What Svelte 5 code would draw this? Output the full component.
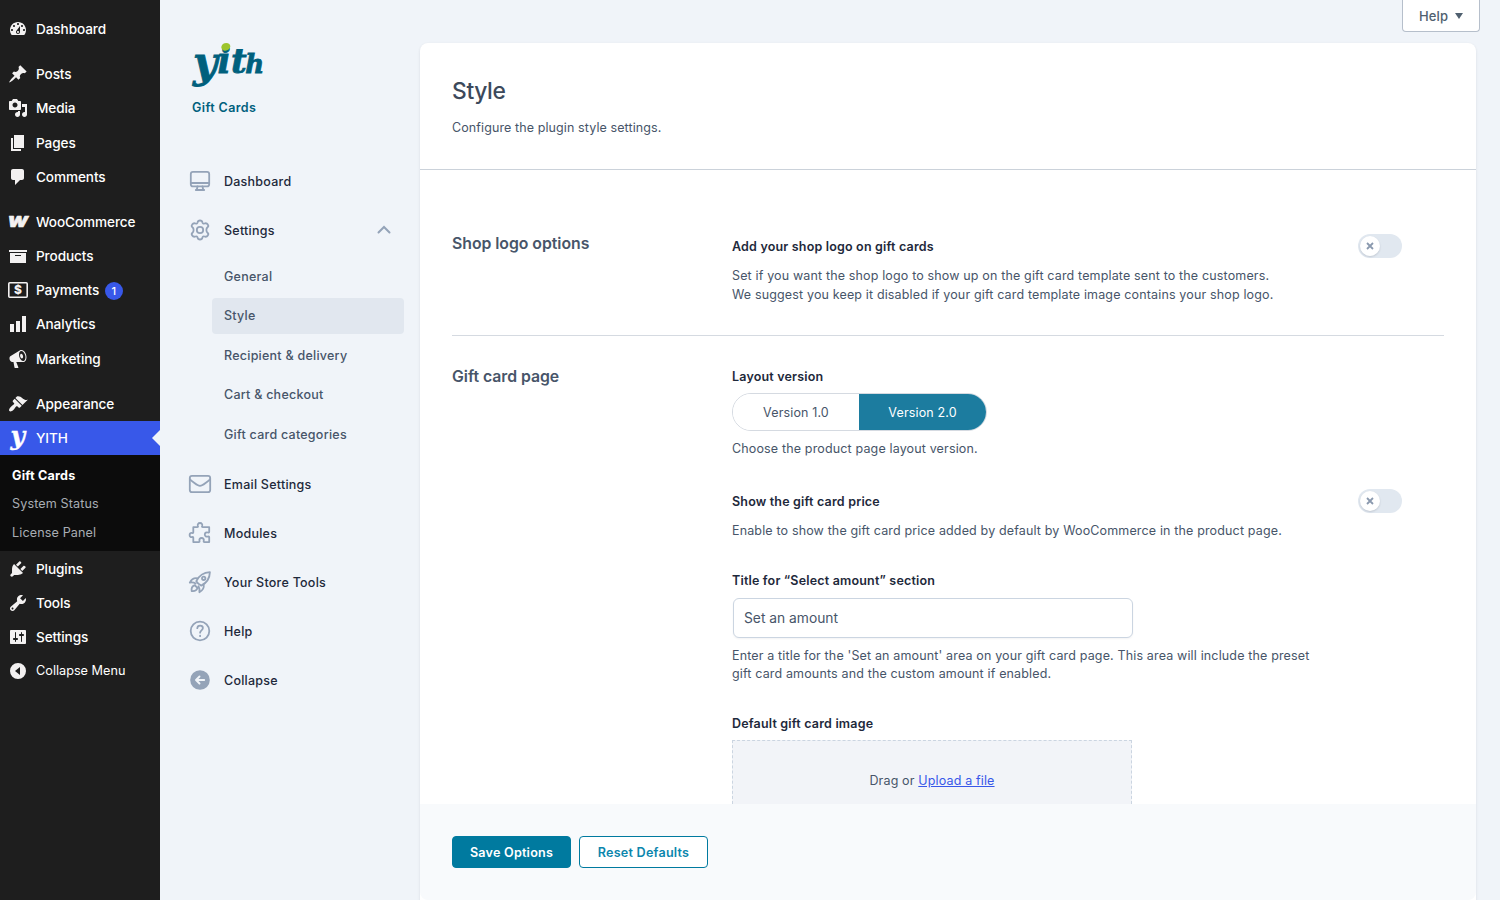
<script>
  // WordPress admin menu, `gap` starts a new group
  const adminMenu = [
    { label: 'Dashboard', icon: 'dashboard' },
    { label: 'Posts', icon: 'post', gap: true },
    { label: 'Media', icon: 'media' },
    { label: 'Pages', icon: 'page' },
    { label: 'Comments', icon: 'comments' },
    { label: 'WooCommerce', icon: 'woo', gap: true },
    { label: 'Products', icon: 'archive' },
    { label: 'Payments', icon: 'payments', badge: 1 },
    { label: 'Analytics', icon: 'chart' },
    { label: 'Marketing', icon: 'megaphone' },
    { label: 'Appearance', icon: 'appearance', gap: true },
    { label: 'YITH', icon: 'yith', children: ['Gift Cards', 'System Status', 'License Panel'] },
    { label: 'Plugins', icon: 'plugins' },
    { label: 'Tools', icon: 'tools' },
    { label: 'Settings', icon: 'settings' }
  ];

  const dashicons = {
    dashboard: 'M3.76 16h12.48c1.1-1.37 1.76-3.11 1.76-5 0-4.42-3.58-8-8-8s-8 3.58-8 8c0 1.89.66 3.63 1.76 5zM10 4c.55 0 1 .45 1 1s-.45 1-1 1-1-.45-1-1 .45-1 1-1zM6 6c.55 0 1 .45 1 1s-.45 1-1 1-1-.45-1-1 .45-1 1-1zm8 0c.55 0 1 .45 1 1s-.45 1-1 1-1-.45-1-1 .45-1 1-1zm-5.37 5.55L12 7v6c0 1.1-.9 2-2 2s-2-.9-2-2c0-.57.24-1.08.63-1.45zM4 10c.55 0 1 .45 1 1s-.45 1-1 1-1-.45-1-1 .45-1 1-1zm12 0c.55 0 1 .45 1 1s-.45 1-1 1-1-.45-1-1 .45-1 1-1zm-5 3c0-.55-.45-1-1-1s-1 .45-1 1 .45 1 1 1 1-.45 1-1z',
    post: 'M10.44 3.02l1.82-1.82 6.36 6.35-1.83 1.82c-1.05-.68-2.48-.57-3.41.36l-.75.75c-.92.93-1.04 2.35-.35 3.41l-1.83 1.82-2.41-2.41-2.8 2.79c-.42.42-3.38 2.71-3.8 2.29s1.86-3.39 2.28-3.81l2.79-2.79L4.1 9.36l1.83-1.82c1.05.69 2.48.57 3.4-.36l.75-.75c.93-.92 1.05-2.35.36-3.41z',
    media: 'M13 11V4c0-.55-.45-1-1-1h-1.67L9 1H5L3.67 3H2c-.55 0-1 .45-1 1v7c0 .55.45 1 1 1h10c.55 0 1-.45 1-1zM7 4.5c1.38 0 2.5 1.12 2.5 2.5S8.38 9.5 7 9.5 4.5 8.38 4.5 7 5.62 4.5 7 4.5zM14 6h5v10.5c0 1.38-1.12 2.5-2.5 2.5S14 17.88 14 16.5s1.12-2.5 2.5-2.5c.17 0 .34.02.5.05V9h-3V6zm-4 8.05V13h2v3.5c0 1.38-1.12 2.5-2.5 2.5S7 17.88 7 16.5 8.12 14 9.5 14c.17 0 .34.02.5.05z',
    page: 'M6 15V2h10v13H6zm-1 1h8v2H3V5h2v11z',
    comments: 'M5 2h9c1.1 0 2 .9 2 2v7c0 1.1-.9 2-2 2h-2l-5 5v-5H5c-1.1 0-2-.9-2-2V4c0-1.1.9-2 2-2z',
    archive: 'M19 4v2H1V4h18zM2 7h16v10H2V7zm11 3V9H7v1h6z',
    chart: 'M18 18V2h-4v16h4zm-6 0V7H8v11h4zm-6 0v-8H2v8h4z',
    megaphone: 'M18.15 5.94c.46 1.62.38 3.22-.02 4.48-.42 1.28-1.26 2.18-2.3 2.48-.16.06-.26.06-.4.06-.06.02-.12.02-.18.02-.06.02-.14.02-.22.02h-6.8l2.22 5.5c.02.14-.06.26-.14.34-.08.1-.24.16-.34.16H6.95c-.1 0-.26-.06-.34-.16-.08-.08-.16-.2-.14-.34l-1-5.5H4.25l-.02-.02c-.5.06-1.08-.18-1.54-.62s-.88-1.08-1.06-1.88c-.24-.8-.2-1.56-.02-2.2.18-.62.58-1.08 1.06-1.3l.02-.02 9-5.4c.1-.06.18-.1.24-.16.06-.04.14-.08.24-.12.16-.08.28-.12.5-.18 1.04-.3 2.24.1 3.22.98s1.84 2.24 2.26 3.86zm-2.58 5.98h-.02c.4-.1.74-.34 1.04-.7.58-.7.86-1.76.86-3.04 0-.64-.1-1.3-.28-1.98-.34-1.36-1.02-2.5-1.78-3.24s-1.68-1.1-2.46-.88c-.82.22-1.4.96-1.7 2-.32 1.04-.28 2.36.06 3.72.38 1.36 1 2.5 1.8 3.24.78.74 1.62 1.1 2.48.88zm-2.54-7.08c.22-.04.42-.02.62.04.38.16.76.48 1.02 1s.42 1.2.42 1.78c0 .3-.04.56-.12.8-.18.48-.44.84-.86.94-.34.1-.8-.06-1.14-.4s-.64-.86-.78-1.5c-.18-.62-.12-1.24.02-1.72s.48-.84.82-.94z',
    appearance: 'M14.48 11.06L7.41 3.99l1.5-1.5c.5-.56 2.3-.47 3.51.32 1.21.8 1.43 1.28 2.91 2.1 1.18.64 2.45 1.26 4.45.85zm-.71.71L6.7 4.7 4.93 6.47c-.39.39-.39 1.02 0 1.41l1.06 1.06c.39.39.39 1.03 0 1.42-.6.6-1.43 1.11-2.21 1.69-.35.26-.7.53-1.01.84C1.43 14.23.4 16.08 1.4 17.07c.99 1 2.84-.03 4.18-1.36.31-.31.58-.66.85-1.02.57-.78 1.08-1.61 1.69-2.21.39-.39 1.02-.39 1.41 0l1.06 1.06c.39.39 1.02.39 1.41 0z',
    plugins: 'M13.11 4.36L9.87 7.6 8 5.73l3.24-3.24c.35-.34 1.05-.2 1.56.32.52.51.66 1.21.31 1.55zm-8 1.77l.91-1.12 9.01 9.01-1.19.84c-.71.71-2.63 1.16-3.82 1.16H6.14L4.9 17.26c-.59.59-1.54.59-2.12 0-.59-.58-.59-1.53 0-2.12l1.24-1.24v-3.88c0-1.13.4-3.19 1.09-3.89zm7.26 3.97l3.24-3.24c.34-.35 1.04-.21 1.55.31.52.51.66 1.21.31 1.55l-3.24 3.25z',
    tools: 'M16.68 9.77c-1.34 1.34-3.3 1.67-4.95.99l-5.41 6.52c-.99.99-2.59.99-3.58 0s-.99-2.59 0-3.57l6.52-5.42c-.68-1.65-.35-3.61.99-4.95 1.28-1.28 3.12-1.62 4.72-1.06l-2.89 2.89 2.82 2.82 2.86-2.87c.53 1.58.18 3.39-1.08 4.65zM3.81 16.21c.4.39 1.04.39 1.43 0 .4-.4.4-1.04 0-1.43-.39-.4-1.03-.4-1.43 0-.39.39-.39 1.03 0 1.43z',
    settings: 'M18 16V4c0-.55-.45-1-1-1H3c-.55 0-1 .45-1 1v12c0 .55.45 1 1 1h14c.55 0 1-.45 1-1zM8 11h1c.55 0 1 .45 1 1s-.45 1-1 1H8v1.5c0 .28-.22.5-.5.5s-.5-.22-.5-.5V13H6c-.55 0-1-.45-1-1s.45-1 1-1h1V5.5c0-.28.22-.5.5-.5s.5.22.5.5V11zm5-2h-1c-.55 0-1-.45-1-1s.45-1 1-1h1V5.5c0-.28.22-.5.5-.5s.5.22.5.5V7h1c.55 0 1 .45 1 1s-.45 1-1 1h-1v5.5c0 .28-.22.5-.5.5s-.5-.22-.5-.5V9z'
  };

  const panelMenu = [
    { label: 'Dashboard', icon: 'desktop' },
    { label: 'Settings', icon: 'cog', children: ['General', 'Style', 'Recipient & delivery', 'Cart & checkout', 'Gift card categories'] },
    { label: 'Email Settings', icon: 'mail' },
    { label: 'Modules', icon: 'puzzle' },
    { label: 'Your Store Tools', icon: 'rocket' },
    { label: 'Help', icon: 'help' },
    { label: 'Collapse', icon: 'collapse' }
  ];

  let currentTab = 'Style';
  let layoutVersion = '2.0';
  let shopLogo = false;
  let showPrice = false;
  let amountTitle = 'Set an amount';
</script>

<div class="wp">
  <nav class="admin-menu">
    {#each adminMenu as item}
      <div class="admin-item" class:gap={item.gap} class:active={item.children}>
        <svg class="admin-icon" width="20" height="20" viewBox="0 0 20 20">
          {#if item.icon === 'woo'}
            <text class="woo" x="-0.5" y="15.3" textLength="20.5" lengthAdjust="spacingAndGlyphs">W</text>
          {:else if item.icon === 'payments'}
            <rect x="0.8" y="2.8" width="18.4" height="14.4" rx="1" fill="none" stroke="currentColor" stroke-width="1.6" />
            <text class="dollar" x="10" y="14.2" text-anchor="middle">$</text>
          {:else if item.icon === 'yith'}
            <text class="y-mark" x="2.5" y="16.5" textLength="14.5" lengthAdjust="spacingAndGlyphs">y</text>
          {:else}
            <path d={dashicons[item.icon]} fill-rule="evenodd" />
          {/if}
        </svg>
        <span>{item.label}</span>
        {#if item.badge}<span class="badge">{item.badge}</span>{/if}
      </div>
      {#if item.children}
        <div class="admin-sub">
          {#each item.children as child, i}
            <div class:current={i === 0}>{child}</div>
          {/each}
        </div>
      {/if}
    {/each}
    <div class="admin-item collapse-menu">
      <svg class="admin-icon" width="20" height="20" viewBox="0 0 20 20">
        <path d="M10 2a8 8 0 1 0 0 16 8 8 0 0 0 0-16zm2 12l-5-4 5-4z" fill-rule="evenodd" />
      </svg>
      <span>Collapse Menu</span>
    </div>
  </nav>

  <aside class="panel-nav">
    <div class="brand">
      <svg width="76" height="52" viewBox="0 0 76 52">
        <text class="wordmark"><tspan x="1" y="37" font-size="42">y</tspan><tspan x="25.5" y="33" font-size="35">i</tspan><tspan x="39" y="33" font-size="34">t</tspan><tspan x="53.200" y="33" font-size="26">h</tspan></text>
        <ellipse cx="33.8" cy="6.8" rx="4.6" ry="3.8" fill="#9dc52c" transform="rotate(-20 33.8 6.8)" />
      </svg>
      <div class="brand-name">Gift Cards</div>
    </div>

    {#each panelMenu as item}
      <div class="panel-item">
        <svg class="panel-icon" width="24" height="24" viewBox="0 0 24 24">
          {#if item.icon === 'desktop'}
            <rect x="2.8" y="2.8" width="18.4" height="14.6" rx="2.2" />
            <path d="M3 14h18M9.5 17.5l-.6 2.8M14.5 17.5l.6 2.8M7.8 21h8.4" />
          {:else if item.icon === 'cog'}
            <path d="M9.6 4.400c.2-1.200 1-1.900 2.400-1.900s2.200.7 2.400 1.900c.2 1 1 1.500 2 1.100 1.400-.5 2.700-.1 3.400 1 .800 1.100.6 2.200-.5 3-.9.8-.9 1.700-.9 2.500s0 1.700.9 2.500c1.100.8 1.300 1.900.5 3-.7 1.100-2 1.500-3.400 1-1-.4-1.800.1-2 1.100-.2 1.200-1 1.900-2.400 1.900s-2.200-.7-2.400-1.900c-.2-1-1-1.500-2-1.100-1.400.5-2.700.1-3.400-1-.8-1.100-.6-2.200.5-3 .9-.8.9-1.700.9-2.500s0-1.700-.9-2.500c-1.100-.8-1.300-1.900-.5-3 .7-1.100 2-1.500 3.400-1 1 .4 1.800-.1 2-1.100z" />
            <circle cx="12" cy="12" r="3.2" />
          {:else if item.icon === 'mail'}
            <rect x="1.8" y="3.8" width="20.4" height="16.4" rx="2.2" />
            <path d="M2 7.3c1 1.200 6.400 5.200 8 6 1.300.7 2.700.7 4 0 1.600-.8 7-4.800 8-6" />
          {:else if item.icon === 'puzzle'}
            <path d="M5.3 6.200h3.900c.8 0 1-.5.7-1.200-.6-1.600.3-3 2.100-3s2.700 1.400 2.100 3c-.3.700-.1 1.200.7 1.200h6.400v4.600c0 .8-.5 1-1.200.7-1.600-.6-3.200.3-3.200 2s1.600 2.600 3.200 2c.7-.3 1.200-.1 1.200.7v4.900h-4.700c-.8 0-1-.5-.8-1.200.5-1.500-.4-2.900-2.100-2.900s-2.600 1.400-2.100 2.900c.2.700 0 1.200-.8 1.200H5.300v-4.400c0-.8-.5-1-1.200-.7-1.300.5-2.500-.4-2.500-2s1.200-2.500 2.500-2c.7.200 1.200 0 1.200-.7z" />
          {:else if item.icon === 'rocket'}
            <path d="M8.300 11.200C11 5.500 15.500 2.400 21.900 2.100c-.2 6.200-3.500 10.900-8.600 13.500-1.500-.7-4.200-3-5-4.400z" />
            <path d="M9.500 8.300c-3.500-.6-6.200 1.300-7.700 4.300 2-.5 4-.3 5.900.9M15.700 14.500c.6 3.500-1.300 6.100-4.300 7.700.4-2 .2-4-.9-5.900M6.300 15.300c-2.300.9-3 3.500-2.600 5.800 2.300.3 4.900-.5 5.700-2.800M7 15.500l2.200 2.200" />
            <circle cx="15.7" cy="8.3" r="1.7" />
          {:else if item.icon === 'help'}
            <circle cx="12" cy="12" r="9.3" />
            <path d="M9.300 9.200c.1-1.500 1.200-2.500 2.800-2.500s2.800 1 2.800 2.400c0 2.200-2.800 2.300-2.800 4.600M12.100 16.600v.6" />
          {:else}
            <circle cx="12" cy="12" r="9.8" fill="#94a3b8" stroke="none" />
            <path d="M16.200 12H8.200M11.500 8.500L8 12l3.500 3.500" stroke="#f0f4f9" stroke-width="1.9" />
          {/if}
        </svg>
        <span>{item.label}</span>
        {#if item.children}
          <svg class="chevron" width="16" height="16" viewBox="0 0 16 16"><path d="M2.500 10.500L8 5l5.500 5.500" /></svg>
        {/if}
      </div>
      {#if item.children}
        <div class="panel-sub">
          {#each item.children as child}
            <div class="sub-item" class:selected={child === currentTab}>{child}</div>
          {/each}
        </div>
      {/if}
    {/each}
  </aside>

  <main class="content">
    <button class="screen-help">Help <span class="caret"></span></button>

    <div class="card">
      <div class="options">
        <header>
          <h1>Style</h1>
          <p>Configure the plugin style settings.</p>
        </header>

        <section class="logo-options">
          <h2>Shop logo options</h2>
          <div class="field with-toggle">
            <div>
              <h3>Add your shop logo on gift cards</h3>
              <p class="desc">Set if you want the shop logo to show up on the gift card template sent to the customers.<br />We suggest you keep it disabled if your gift card template image contains your shop logo.</p>
            </div>
            <div class="toggle" class:on={shopLogo}>
              <span class="knob"><svg width="8" height="8" viewBox="0 0 8 8"><path d="M1 1l6 6M7 1L1 7" /></svg></span>
            </div>
          </div>
        </section>

        <section class="page-options">
          <h2>Gift card page</h2>
          <div class="fields">
            <div class="field">
              <h3>Layout version</h3>
              <div class="switcher">
                {#each ['1.0', '2.0'] as version}
                  <button class:chosen={version === layoutVersion} on:click={() => layoutVersion = version}>Version {version}</button>
                {/each}
              </div>
              <p class="desc">Choose the product page layout version.</p>
            </div>

            <div class="field with-toggle price">
              <div>
                <h3>Show the gift card price</h3>
                <p class="desc">Enable to show the gift card price added by default by WooCommerce in the product page.</p>
              </div>
              <div class="toggle" class:on={showPrice}>
                <span class="knob"><svg width="8" height="8" viewBox="0 0 8 8"><path d="M1 1l6 6M7 1L1 7" /></svg></span>
              </div>
            </div>

            <div class="field amount">
              <h3>Title for “Select amount” section</h3>
              <input type="text" bind:value={amountTitle} />
              <p class="desc">Enter a title for the 'Set an amount' area on your gift card page. This area will include the preset<br />gift card amounts and the custom amount if enabled.</p>
            </div>

            <div class="field image">
              <h3>Default gift card image</h3>
              <div class="dropzone">Drag or <span class="upload">Upload a file</span></div>
            </div>
          </div>
        </section>
      </div>

      <footer>
        <button class="save">Save Options</button>
        <button class="reset">Reset Defaults</button>
      </footer>
    </div>
  </main>
</div>

<style>
  :global(body) {
    margin: 0;
    background: #f0f4f9;
    overflow: hidden;
  }

  .wp {
    display: flex;
    height: 900px;
    overflow: hidden;
    font-family: Inter, 'Liberation Sans', sans-serif;
    font-size: 12.5px;
    letter-spacing: 0.15px;
    color: #475569;
  }

  h1, h2, h3, p {
    margin: 0;
  }

  button {
    font-family: inherit;
    box-sizing: border-box;
  }

  /* WordPress menu */
  .admin-menu {
    flex: 0 0 160px;
    box-sizing: border-box;
    padding-top: 11.85px;
    background: #1e1e1e;
    color: #fff;
  }

  .admin-item {
    position: relative;
    display: flex;
    align-items: center;
    height: 34.2px;
    padding-left: 8px;
    font-size: 13.6px;
    font-weight: 500;
    letter-spacing: -0.1px;
  }

  .admin-item.gap {
    margin-top: 11px;
  }

  .admin-item.active {
    background: #3858e9;
  }

  .admin-item.active::after {
    content: '';
    position: absolute;
    right: 0;
    top: 9px;
    border: 8px solid transparent;
    border-left-width: 0;
    border-right-color: #f0f4f9;
  }

  .admin-icon {
    margin-right: 8px;
    fill: currentColor;
    color: #f3f1f1;
    overflow: visible;
  }

  .woo {
    font: italic 900 15px Inter, sans-serif;
    letter-spacing: 0;
    stroke: currentColor;
    stroke-width: 0.6;
    stroke-linejoin: round;
  }

  .dollar {
    font: 800 12px Inter, sans-serif;
    letter-spacing: 0;
  }

  .y-mark {
    font: italic bold 26px 'DejaVu Serif', serif;
    letter-spacing: 0;
    fill: #fff;
    stroke: #fff;
    stroke-width: 0.4;
  }

  .badge {
    width: 18px;
    height: 18px;
    margin: 2px 0 0 5.5px;
    border-radius: 9px;
    background: #3858e9;
    font-size: 11px;
    line-height: 18px;
    text-align: center;
  }

  .admin-sub {
    box-sizing: border-box;
    height: 96.4px;
    padding: 6.7px 0 0 12px;
    background: #0c0c0c;
    color: #a8adb3;
    font-size: 12.6px;
    line-height: 28.4px;
    letter-spacing: 0.12px;
  }

  .current {
    color: #fff;
    font-weight: 700;
    letter-spacing: 0.2px;
  }

  .collapse-menu {
    height: 33px;
    font-size: 12.7px;
    font-weight: 400;
    letter-spacing: 0;
  }

  /* plugin panel navigation */
  .panel-nav {
    flex: 0 0 260px;
    box-sizing: border-box;
    padding: 40px 16px 0 28px;
  }

  .brand {
    height: 116.5px;
    padding-left: 4px;
  }

  .brand svg {
    display: block;
    overflow: visible;
  }

  .wordmark {
    font: italic bold 36px 'DejaVu Serif', serif;
    letter-spacing: 0;
    fill: #00607d;
    stroke: #00607d;
    stroke-width: 0.8;
  }

  .brand-name {
    margin-top: 7px;
    color: #00607d;
    font-weight: 600;
    line-height: 17px;
    letter-spacing: 0.4px;
  }

  .panel-item {
    display: flex;
    align-items: center;
    height: 49px;
    color: #1e293b;
    font-weight: 500;
    letter-spacing: 0.25px;
  }

  .panel-icon {
    margin-right: 12px;
    fill: none;
    stroke: #94a3b8;
    stroke-width: 1.8;
    stroke-linecap: round;
    stroke-linejoin: round;
  }

  .chevron {
    margin-left: auto;
    margin-right: 12px;
    fill: none;
    stroke: #94a3b8;
    stroke-width: 2;
    stroke-linecap: round;
  }

  .panel-sub {
    padding: 4px 0 3.6px 24px;
  }

  .sub-item {
    height: 36px;
    margin-bottom: 3.5px;
    padding-left: 12px;
    border-radius: 4px;
    color: #475569;
    font-weight: 500;
    line-height: 36px;
    letter-spacing: 0.25px;
  }

  .sub-item.selected {
    background: #e1e7ef;
  }

  /* settings card */
  .content {
    flex: 1;
    min-width: 0;
    padding-right: 24px;
  }

  .screen-help {
    display: flex;
    align-items: center;
    justify-content: center;
    gap: 7px;
    width: 78px;
    height: 32px;
    margin: 0 -4px 11px auto;
    padding: 0;
    border: 1px solid #b6bfcb;
    border-top: 0;
    border-radius: 0 0 4px 4px;
    background: #fff;
    color: #50606f;
    font-size: 13px;
    font-weight: 500;
    letter-spacing: 0.1px;
  }

  .caret {
    border: 4px solid transparent;
    border-top: 6px solid #50606f;
    border-bottom: 0;
  }

  .card {
    height: 870px;
    border-radius: 8px;
    background: #fff;
    box-shadow: 0 1px 3px rgba(15, 23, 42, 0.1);
  }

  .options {
    height: 761px;
    overflow: hidden;
  }

  header {
    box-sizing: border-box;
    height: 127px;
    padding: 32px 32px 0;
    border-bottom: 1px solid #cbd2da;
  }

  h1 {
    color: #3c495b;
    font-size: 22.8px;
    font-weight: 500;
    line-height: 32px;
    letter-spacing: -0.35px;
  }

  header p {
    margin-top: 11px;
    line-height: 19px;
    letter-spacing: 0.1px;
  }

  section {
    display: grid;
    grid-template-columns: 280px 1fr;
    margin: 0 32px;
  }

  .logo-options {
    box-sizing: border-box;
    height: 166px;
    padding-top: 66px;
    border-bottom: 1px solid #d5dae1;
  }

  .page-options {
    padding-top: 30px;
  }

  h2 {
    color: #475569;
    font-size: 15.8px;
    font-weight: 600;
    line-height: 22px;
    letter-spacing: -0.03px;
  }

  .logo-options h2 {
    margin-top: -3px;
  }

  h3 {
    margin-bottom: -2px;
    color: #1e293b;
    font-size: 12.5px;
    font-weight: 600;
    line-height: 22px;
    letter-spacing: 0.18px;
  }

  .desc {
    margin-top: 10px;
    line-height: 19px;
    white-space: nowrap;
  }

  .with-toggle {
    display: flex;
    justify-content: space-between;
    padding-right: 42px;
  }

  .toggle {
    box-sizing: border-box;
    width: 44px;
    height: 24px;
    margin-top: -2px;
    padding: 2px;
    border-radius: 12px;
    background: #e1e8f0;
  }

  .toggle.on {
    padding-left: 22px;
    background: #1c7c9f;
  }

  .knob {
    display: grid;
    place-items: center;
    width: 20px;
    height: 20px;
    border-radius: 50%;
    background: #fff;
    box-shadow: 0 1px 2px rgba(15, 23, 42, 0.15);
  }

  .knob path {
    stroke: #8a99ae;
    stroke-width: 1.8;
  }

  .switcher {
    display: flex;
    box-sizing: border-box;
    width: 255px;
    height: 38px;
    margin-top: 7px;
    overflow: hidden;
    border: 1px solid #d5dae1;
    border-radius: 19px;
  }

  .switcher button {
    flex: 0 0 126px;
    padding: 0;
    border: 0;
    background: #fff;
    color: #475569;
    font-size: 12.5px;
    letter-spacing: 0.14px;
  }

  .switcher button:last-child {
    flex: 1;
  }

  .switcher button.chosen {
    background: #1c7c9f;
    color: #fff;
  }

  .switcher + .desc {
    margin-top: 8px;
  }

  .price {
    margin-top: 33px;
  }

  .amount {
    margin-top: 30px;
  }

  input {
    display: block;
    box-sizing: border-box;
    width: 400px;
    height: 40px;
    margin: 8px 0 0 1px;
    padding: 0 10px 1px;
    border: 1px solid #cbd5e1;
    border-radius: 6px;
    background: #fff;
    box-shadow: 0 1px 2px rgba(15, 23, 42, 0.05);
    color: #475569;
    font: 13.8px Inter, sans-serif;
    outline: 0;
  }

  .amount .desc {
    margin-top: 9px;
    line-height: 18px;
  }

  .image {
    margin-top: 30px;
  }

  .dropzone {
    box-sizing: border-box;
    width: 400px;
    height: 120px;
    margin-top: 7px;
    padding-top: 30px;
    border: 1px dashed #cbd5e1;
    background: #f2f4f8;
    line-height: 19px;
    text-align: center;
  }

  .upload {
    color: #3858e9;
    text-decoration: underline;
  }

  footer {
    display: flex;
    align-items: flex-start;
    gap: 8px;
    box-sizing: border-box;
    height: 96px;
    padding: 32px;
    border-radius: 0 0 8px 8px;
    background: #f8fafc;
  }

  footer button {
    height: 32px;
    padding: 0;
    border: 1px solid #007a9f;
    border-radius: 4px;
    font-size: 12.6px;
    font-weight: 600;
    letter-spacing: 0.22px;
  }

  .save {
    width: 119px;
    background: #007a9f;
    color: #fff;
  }

  .reset {
    width: 129px;
    background: #fff;
    color: #0c86ad;
  }
</style>
